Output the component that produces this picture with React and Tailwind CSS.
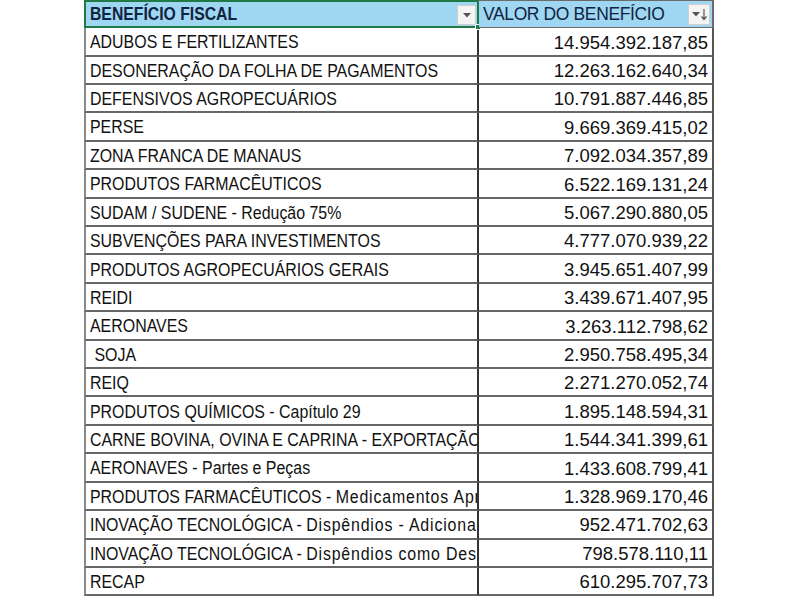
import React from "react";

const rows = [
  ["ADUBOS E FERTILIZANTES", "", "14.954.392.187,85"],
  ["DESONERAÇÃO DA FOLHA DE PAGAMENTOS", "", "12.263.162.640,34"],
  ["DEFENSIVOS AGROPECUÁRIOS", "", "10.791.887.446,85"],
  ["PERSE", "", "9.669.369.415,02"],
  ["ZONA FRANCA DE MANAUS", "", "7.092.034.357,89"],
  ["PRODUTOS FARMACÊUTICOS", "", "6.522.169.131,24"],
  ["SUDAM / SUDENE - ", "Redução 75%", "5.067.290.880,05"],
  ["SUBVENÇÕES PARA INVESTIMENTOS", "", "4.777.070.939,22"],
  ["PRODUTOS AGROPECUÁRIOS GERAIS", "", "3.945.651.407,99"],
  ["REIDI", "", "3.439.671.407,95"],
  ["AERONAVES", "", "3.263.112.798,62"],
  ["\u00a0SOJA", "", "2.950.758.495,34"],
  ["REIQ", "", "2.271.270.052,74"],
  ["PRODUTOS QUÍMICOS - ", "Capítulo 29", "1.895.148.594,31"],
  ["CARNE BOVINA, OVINA E CAPRINA - EXPORTAÇÃO", "", "1.544.341.399,61"],
  ["AERONAVES - ", "Partes e Peças", "1.433.608.799,41"],
  ["PRODUTOS FARMACÊUTICOS - ", "Medicamentos Aprovados", "1.328.969.170,46", true],
  ["INOVAÇÃO TECNOLÓGICA - ", "Dispêndios - Adicional", "952.471.702,63", true],
  ["INOVAÇÃO TECNOLÓGICA - ", "Dispêndios como Despesas", "798.578.110,11", true],
  ["RECAP", "", "610.295.707,73"],
];

function Caret() {
  return (
    <svg width="8" height="5" viewBox="0 0 8 5">
      <path d="M0 0 L8 0 L4 4.5 Z" fill="#555" />
    </svg>
  );
}

export default function App() {
  return (
    <div className="w-[800px] h-[600px] bg-white overflow-hidden">
      <div className="ml-[84px] w-[630px] font-['Liberation_Sans',sans-serif]">
        {/* header */}
        <div className="flex h-[28.2px]">
          <div className="relative w-[395px] bg-[#9fd6f2] border-2 border-[#1f7a45] flex items-center pl-[4px] text-[17.5px] font-bold text-[#0f2440]">
            <span className="whitespace-nowrap inline-block origin-left scale-x-[0.9]">BENEFÍCIO FISCAL</span>
            <div className="absolute right-[1px] top-[3px] w-[19px] h-[20px] bg-[#f4f4f4] border border-[#cfcfcf] flex items-center justify-center">
              <Caret />
            </div>
            <div className="absolute -right-[4px] -bottom-[4px] w-[6px] h-[6px] bg-[#1f7a45] border border-white" />
          </div>
          <div className="relative w-[235px] bg-[#9fd6f2] border-t border-r-2 border-b border-[#6a6a6a] flex items-center pl-[4px] text-[19px] tracking-[-0.4px] text-[#0f2440]">
            <span className="whitespace-nowrap scale-x-[0.92] origin-left inline-block">VALOR DO BENEFÍCIO</span>
            <div className="absolute right-[2px] top-[3px] w-[22px] h-[21px] bg-[#f4f4f4] border border-[#cfcfcf] flex items-center justify-center gap-[1px]">
              <Caret />
              <svg width="6" height="12" viewBox="0 0 6 12">
                <path d="M3 0 L3 10 M0.5 7.5 L3 10.5 L5.5 7.5" stroke="#555" strokeWidth="1.2" fill="none" />
              </svg>
            </div>
          </div>
        </div>
        {rows.map(([upper, lower, value, wide], i) => (
          <div key={i} className="flex h-[28.42px]">
            <div className="w-[395px] border-l-2 border-b-2 border-r-2 border-l-[#8a8a8a] border-b-[#666] border-r-[#333] flex items-center pl-[4px] pt-[2px] overflow-hidden text-[17.5px] text-[#111]">
              <span className="whitespace-pre inline-block origin-left scale-x-[0.91]">
                {upper}
                {lower && (
                  <span className={wide ? "tracking-[0.9px]" : ""}>{lower}</span>
                )}
              </span>
            </div>
            <div className="w-[235px] border-b-2 border-r-2 border-b-[#666] border-r-[#555] flex items-center justify-end pr-[4px] pt-[2px] text-[18.5px] text-[#111]">
              <span className="whitespace-nowrap">{value}</span>
            </div>
          </div>
        ))}
      </div>
    </div>
  );
}
